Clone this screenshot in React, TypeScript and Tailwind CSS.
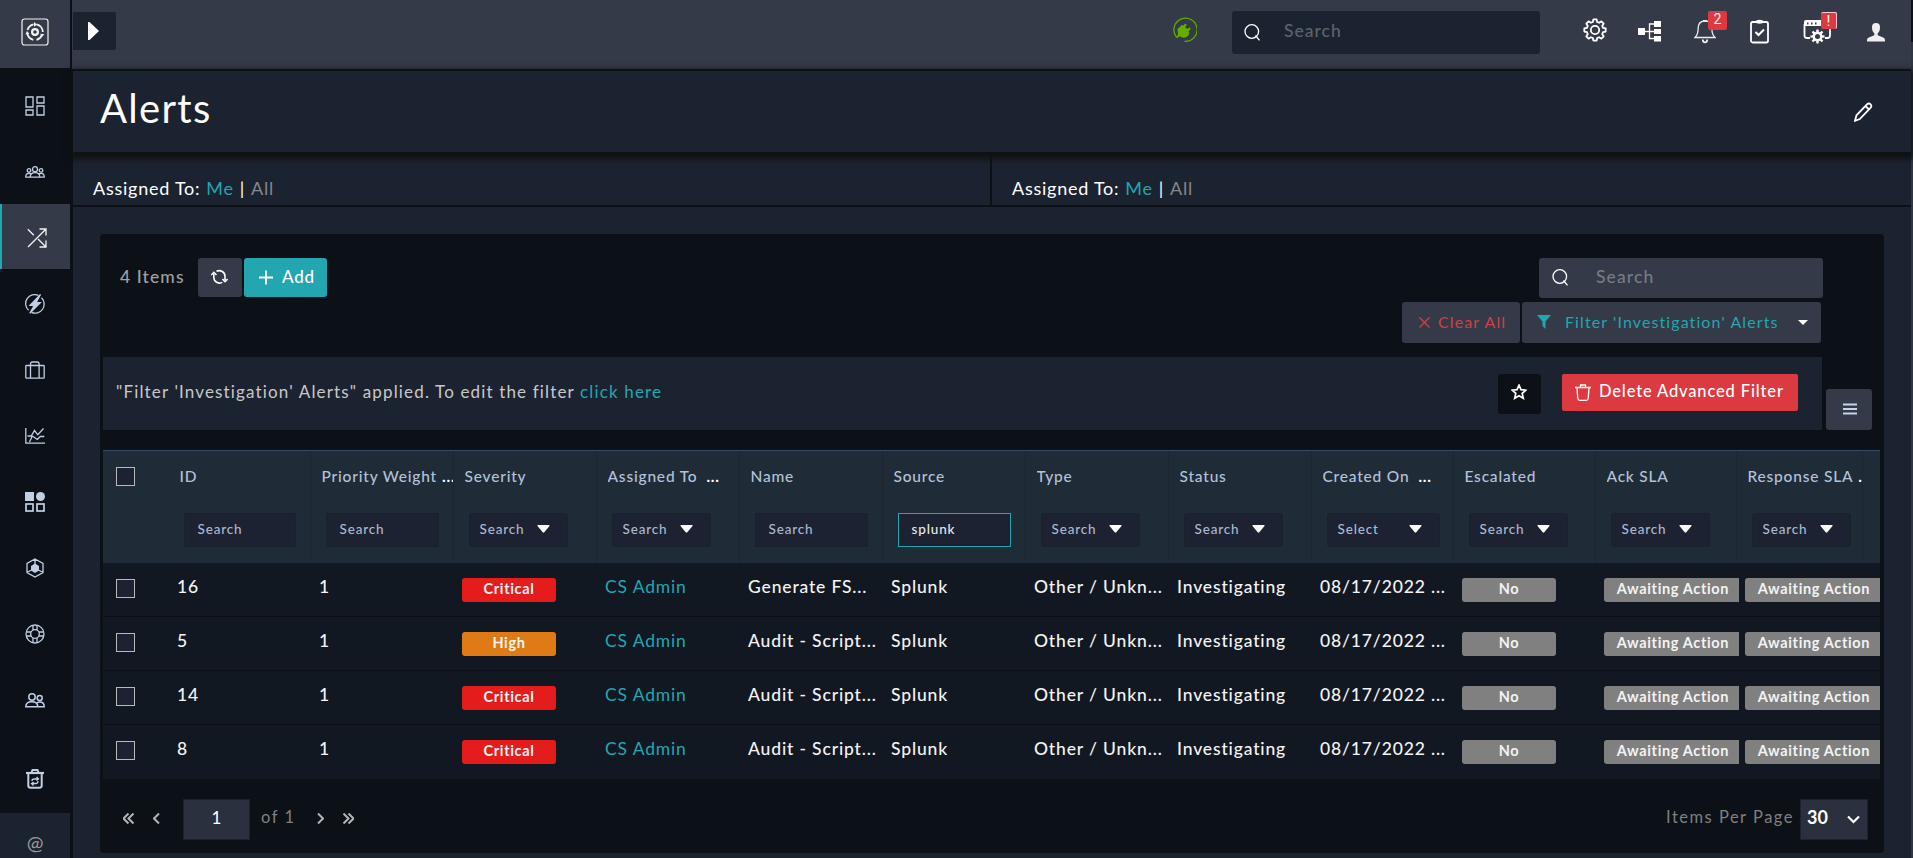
import type { ReactNode } from "react"

type Column = {
  label:     string
  kind:      "input" | "select"
  value?:    string
  hint?:     string
  truncated?: boolean
}

type Alert = {
  id:       number
  severity: "Critical" | "High"
  name:     string
}

const columns: Column[] = [
  { label: "ID", kind: "input" },
  { label: "Priority Weight", kind: "input", truncated: true },
  { label: "Severity", kind: "select" },
  { label: "Assigned To", kind: "select", truncated: true },
  { label: "Name", kind: "input" },
  { label: "Source", kind: "input", value: "splunk" },
  { label: "Type", kind: "select" },
  { label: "Status", kind: "select" },
  { label: "Created On", kind: "select", hint: "Select", truncated: true },
  { label: "Escalated", kind: "select" },
  { label: "Ack SLA", kind: "select" },
  { label: "Response SLA", kind: "select", truncated: true },
]

const alerts: Alert[] = [
  { id: 16, severity: "Critical", name: "Generate FS..." },
  { id: 5, severity: "High", name: "Audit - Script..." },
  { id: 14, severity: "Critical", name: "Audit - Script..." },
  { id: 8, severity: "Critical", name: "Audit - Script..." },
]

const gridCols = "grid grid-cols-[66px_142px_143px_143px_143px_143px_143px_143px_143px_142px_142px_141px_143px]"

function Svg({ w, h, children, className = "" }: { w: number; h: number; children: ReactNode; className?: string }) {
  return (
    <svg
      width={w}
      height={h}
      viewBox={`0 0 ${w} ${h}`}
      fill="none"
      stroke="currentColor"
      strokeWidth="1.3"
      className={`shrink-0 ${className}`}
    >
      {children}
    </svg>
  )
}

/* cog outline with n rounded teeth around (cx, cy) */
function cogPath(cx: number, cy: number, outer: number, inner: number, n: number) {
  const pts: string[] = []
  for (let i = 0; i < n; i++) {
    const a = (i / n) * Math.PI * 2 - Math.PI / 2
    const step = Math.PI / n
    const at = (r: number, t: number) => `${(cx + r * Math.cos(t)).toFixed(2)} ${(cy + r * Math.sin(t)).toFixed(2)}`
    pts.push(at(inner, a - step * 0.68), at(outer, a - step * 0.38), at(outer, a + step * 0.38), at(inner, a + step * 0.68))
  }
  return `M${pts.join("L")}Z`
}

const sideIcons: { name: string; icon: ReactNode; active?: boolean }[] = [
  {
    name: "Dashboard",
    icon: (
      <Svg w={20} h={20}>
        <path d="M1 1h7v10H1zM12 1h7v6h-7zM1 14h7v5H1zM12 10h7v9h-7z" />
      </Svg>
    ),
  },
  {
    name: "Teams",
    icon: (
      <Svg w={20} h={12}>
        <circle cx="10" cy="3.2" r="2.5" />
        <circle cx="4" cy="4.4" r="1.8" />
        <circle cx="16" cy="4.4" r="1.8" />
        <path d="M5.2 11c0-3 1.8-4.4 4.8-4.4s4.8 1.400 4.800 4.400M.7 11c0-2.200.9-3.700 3.300-3.700 1 0 1.700.3 2 .7M19.300 11c0-2.200-.9-3.700-3.300-3.700-1 0-1.700.3-2 .7M.2 11.200h19.600" />
      </Svg>
    ),
  },
  {
    name: "Incident Response",
    active: true,
    icon: (
      <Svg w={20} h={20} className="relative left-px">
        <path d="M.8 1.200l6 6M1 19L19 1M12.500 1H19v6.500M11 11l8 8M12.500 19H19v-6.500" />
      </Svg>
    ),
  },
  {
    name: "Automation",
    icon: (
      <Svg w={20} h={20}>
        <path d="M13.500 1.500A9 9 0 0 0 3.600 16.300M16.500 3.800A9 9 0 0 1 6.500 18.400" />
        <path d="M15.500.5L5 11.300h4.300L4.800 19.200 15.300 8.700H11z" fill="currentColor" />
      </Svg>
    ),
  },
  {
    name: "Resources",
    icon: (
      <Svg w={20} h={18}>
        <rect x=".8" y="4.500" width="18.400" height="12.700" rx=".8" />
        <path d="M5.500 17V3q0-2 2-2h4.600q2 0 2 2v14" />
      </Svg>
    ),
  },
  {
    name: "Reports",
    icon: (
      <Svg w={20} h={16}>
        <path d="M.8 0v15.200H20M2.500 8h3.700l3.300-5.500 3.300 4.300L18.500.5M4.500 14l2.800-6 5 3.500 3-3h4" />
      </Svg>
    ),
  },
  {
    name: "Widgets",
    icon: (
      <Svg w={20} h={20} className="[stroke-width:1.7]">
        <rect x="0" y="0" width="9" height="9" fill="currentColor" stroke="none" />
        <circle cx="15.500" cy="4.500" r="4.500" fill="currentColor" stroke="none" />
        <rect x="1" y="12" width="7" height="7" />
        <rect x="12" y="12" width="7" height="7" />
      </Svg>
    ),
  },
  {
    name: "Connectors",
    icon: (
      <Svg w={20} h={20}>
        <path d="M10 1l8 4.500v9L10 19l-8-4.500v-9z M10 1v6M2 14.500l4.500-2.500M18 14.500L13.500 12" />
        <path d="M10 5.500l4 2.500v4.500L10 15l-4-2.500V8z" fill="currentColor" stroke="none" />
      </Svg>
    ),
  },
  {
    name: "Help",
    icon: (
      <Svg w={20} h={20}>
        <circle cx="10" cy="10" r="9" />
        <circle cx="10" cy="10" r="4.300" />
        <path d="M8 1.500v4.500M12 1.500v4.500M8 14v4.500M12 14v4.500M1.500 8H6M1.500 12H6M14 8h4.500M14 12h4.500" />
      </Svg>
    ),
  },
  {
    name: "Users",
    icon: (
      <Svg w={20} h={15} className="[stroke-width:1.500]">
        <circle cx="7" cy="4" r="3.200" />
        <circle cx="14.700" cy="5" r="2.500" />
        <path d="M.8 13.800c0-3.300 2.400-5 6-5s6 1.700 6 5zM12 9.800c.8-.5 1.600-.7 2.700-.7 2.800 0 4.500 1.600 4.500 4.700h-6" />
      </Svg>
    ),
  },
]

function Sidebar() {
  return (
    <aside className="flex w-[70px] shrink-0 flex-col bg-[#0c1017] text-[#c0cfe4]">
      <div className="flex h-[68px] shrink-0 items-center justify-center bg-[#343a48] pb-[5px] text-[#f2f2f2]">
        <Svg w={28} h={28} className="-ml-px">
          <rect x="1" y="1" width="26" height="26" rx="2.500" strokeWidth="1.200" />
          <circle cx="14" cy="14" r="2.900" strokeWidth="2.200" />
          <path d="M12.500 6.300a8 8 0 0 0-6 5.700M6.300 15.500a8 8 0 0 0 6 6.300M15.500 21.800a8 8 0 0 0 5.600-4.600M21.800 14A8 8 0 0 0 15.500 6.300" strokeWidth="1.800" />
          <path d="M13 4l3 2.400-3 2.300zM4.500 16.500l1.400-3.400 2.500 2.600zM23.500 16.200l-3.600 3.200-.4-3.600z" fill="currentColor" stroke="none" />
        </Svg>
      </div>
      <nav className="flex flex-col pt-[5px]">
        {sideIcons.map(({ name, icon, active }) => (
          <a
            key={name}
            title={name}
            className={`flex items-center justify-center ${
              active ? "-mt-px mb-0.5 h-[65px] border-l-2 border-[#22a6b0] bg-[#343a48] pt-[3px] text-[#f4f4f4]" : "h-[66px]"
            }`}
          >
            {icon}
          </a>
        ))}
      </nav>
      <div className="flex h-[80px] items-center justify-center pt-[12px]">
        <Svg w={18} h={20} className="[stroke-width:2]">
          <path d="M0 4h18" strokeWidth="2.200" />
          <path d="M5.500 3.500L6.500 1h5l1 2.500" />
          <path d="M2.300 4v12.500q0 2.300 2.300 2.300h8.800q2.300 0 2.300-2.300V4" />
          <path d="M12 10H8q-2 0-2 2M12 12q0 2.500-2 2.500H6M10.500 8l2 2-2 1.500M7.500 16.500l-2-2 2-1.500" strokeWidth="1.300" />
        </Svg>
      </div>
      <div className="flex grow items-center justify-center bg-[#1c2330] pt-[13px] text-[20px] text-[#9a9a9a]">@</div>
    </aside>
  )
}

function SearchIcon() {
  return (
    <Svg w={17} h={17} className="text-white">
      <circle cx="7.800" cy="7.500" r="6.800" />
      <path d="M11.500 11.500l4 4.800" />
    </Svg>
  )
}

function Badge({ children, className }: { children: ReactNode; className: string }) {
  return (
    <span className={`absolute flex items-center justify-center rounded-[2px] bg-[#dc3a40] font-[Roboto,sans-serif] text-[#f6f6f6] ${className}`}>
      {children}
    </span>
  )
}

function TopBar() {
  return (
    <header className="flex h-[69px] shrink-0 items-start bg-[#343a48] pl-px text-white">
      <button className="mt-3 flex h-[38px] w-[43px] items-center rounded-r-[2px] bg-[#1c2330] pb-px pl-[15px]">
        <svg width="11" height="18" viewBox="0 0 11 18" fill="currentColor"><path d="M0 0h1.500L11 9l-9.500 9H0z" /></svg>
      </button>
      <div className="grow" />
      <Svg w={25} h={26} className="mt-[17px] text-[#63ae00]">
        <path d="M5.500 20.800L4.300 19.800A11.600 11.600 0 1 1 12.500 24.300" strokeWidth="1.200" />
        <path d="M5.500 12l4-3.800q1-.6 1.500.5l2.300-1.900q1.500-.1 1.200 1.400l-1.300 1.800 2 2 2-1.400q1.600 0 1.300 1.600l-2 2.300.8 1.200-.3 1.800c-1 2-3 3.200-5.200 3.200-1.700 0-3-.5-3.800-1.400L5 20.800l-.5-1 1.500-2z" fill="currentColor" stroke="none" />
      </Svg>
      <div className="mt-[11px] ml-[35px] flex h-[43px] w-[308px] items-center gap-[23px] rounded-[3px] bg-[#1c2330] pb-px pl-3">
        <SearchIcon />
        <span className="pb-px text-[17.500px] font-medium tracking-[1px] text-[#5c636d]">Search</span>
      </div>
      <div className="mt-[19px] ml-[43px] flex h-6 items-start">
        <Svg w={24} h={24} className="-mt-px [stroke-width:1.800]">
          <path d={cogPath(12, 12, 10.800, 8.300, 8)} strokeLinejoin="round" />
          <circle cx="12" cy="12" r="4.200" />
        </Svg>
        <Svg w={24} h={24} className="ml-[31px]">
          <path d="M0 9h7v7H0zM16 2h7v6h-7zM16 10h7v5h-7zM16 17h7v5.500h-7z" fill="currentColor" stroke="none" />
          <path d="M7 12.500h9M16 5h-4.500v14.500H16" />
        </Svg>
        <div className="relative ml-8">
          <Svg w={22} h={25} className="text-[#eee]">
            <path d="M1 18.500c3.500-3 3-6.500 3.200-10C4.500 4 7.500 2 11 2s6.500 2 6.800 6.500c.2 3.500-.3 7 3.200 10z" />
            <path d="M8.800 20.500c0 3.800 4.400 3.800 4.400 0M9 1.800h4" strokeWidth="1.800" />
          </Svg>
          <Badge className="-top-2 left-[14px] h-[19px] w-[19px] pb-0.5 text-[14px]">2</Badge>
        </div>
        <Svg w={19} h={25} className="ml-[34px] [stroke-width:1.800]">
          <rect x="1" y="3" width="17" height="20.500" rx="1.800" />
          <path d="M5 3q1-2.200 4.500-2.200T14 3q-1 1.800-4.500 1.800T5 3z" fill="currentColor" stroke="none" />
          <path d="M5.500 13l3 3 5.500-5.500" strokeWidth="2" />
        </Svg>
        <div className="relative ml-[34px]">
          <Svg w={29} h={25} className="[stroke-width:1.800]">
            <path d="M1 3q0-2 2-2h23q1.500 0 1.500 2v4H1z" fill="currentColor" stroke="none" />
            <path d="M4 4.500h1.500M8 4.500h1.500M12 4.500h1.500" stroke="#343a48" />
            <path d="M1.500 5v11.500q0 2.500 2.500 2.500h3M22 19h2.500q2.500 0 2.500-2.500V6" />
            <path d={cogPath(14.500, 17.500, 7.200, 5, 8)} fill="currentColor" stroke="none" />
            <circle cx="14.500" cy="17.500" r="2.500" fill="#343a48" stroke="none" />
          </Svg>
          <Badge className="-top-[7px] left-[18px] h-[17px] w-4 border-t border-r border-[#f3c6d8] text-[15px]">!</Badge>
        </div>
        <svg width="18" height="19" viewBox="0 0 18 19" fill="#efefef" className="mt-[4px] ml-[35px] shrink-0">
          <path d="M9 0c3 0 4.200 2 4 4.800-.1 2.400-.8 4.200-2.300 5.400v2l5.500 2.300c1.300.6 1.800 1.500 1.800 3v1H0v-1c0-1.500.5-2.400 1.800-3l5.500-2.300v-2C5.800 9 5.100 7.200 5 4.800 4.800 2 6 0 9 0z" />
        </svg>
      </div>
      <div className="w-[26px] shrink-0" />
    </header>
  )
}

function AssignedTo({ className = "" }: { className?: string }) {
  return (
    <div className={`flex items-start gap-[6px] pt-6 text-[18px] leading-6 tracking-[0.75px] text-white ${className}`}>
      <span>Assigned To:</span>
      <a className="text-[#22a6b0]">Me</a>
      <span>|</span>
      <a className="text-[#84878d]">All</a>
    </div>
  )
}

function Checkbox() {
  return <span className="ml-[13px] block h-[19px] w-[19px] border border-[#b9b9b9] bg-[#1c2231]" />
}

function Toolbar() {
  return (
    <div className="flex h-[123px] items-start pt-6 pr-[61px] pl-5 text-[17px]">
      <span className="w-[78px] text-[17.500px] leading-[37px] font-medium tracking-[1.100px] text-[#a0a0a0]">4 Items</span>
      <button className="flex h-[39px] w-[44px] items-center justify-center rounded-[3px] bg-[#343a48] pr-0.5 pb-px text-white">
        <Svg w={17} h={16} className="[stroke-width:1.600]">
          <path d="M2.800 4.500v4a5.800 5.800 0 0 0 8.500 4.900M14 11.300V7.500A5.800 5.800 0 0 0 5.500 2.300" />
          <path d="M.3 6l2.500-2.700L5.500 6M11.400 10l2.600 2.700 2.600-2.700" />
        </Svg>
      </button>
      <button className="ml-0.5 flex h-[39px] w-[83px] items-center gap-[9px] rounded-[3px] bg-[#22a6b0] pb-[2px] pl-[15px] font-medium tracking-[0.8px] text-white">
        <Svg w={14} h={16}><path d="M7 1.500v14M0 8.500h14" strokeWidth="1.800" /></Svg>
        Add
      </button>
      <div className="ml-auto flex flex-col items-end gap-1 tracking-[1.100px]">
        <div className="flex h-10 w-[284px] items-center gap-[27px] rounded-[3px] bg-[#343a48] pb-0.5 pl-[13px] text-[17.500px] font-medium text-[#767b85]">
          <SearchIcon />
          Search
        </div>
        <div className="mr-0.5 flex gap-0.5 text-[16px]">
          <button className="flex h-[41px] w-[118px] items-center gap-2 rounded-[3px] bg-[#343a48] pb-0.5 pl-[17px] whitespace-nowrap text-[#d23f45]">
            <Svg w={11} h={11} className="mt-0.5"><path d="M.5.5l10 10M10.500.5l-10 10" /></Svg>
            Clear All
          </button>
          <button className="flex h-[41px] w-[299px] items-center rounded-[3px] bg-[#343a48] pb-0.5 pl-[15px] whitespace-nowrap text-[#22a6b0]">
            <svg width="14" height="14" viewBox="0 0 14 14" fill="currentColor" className="mt-px"><path d="M0 0h14L8.500 6.500V14L5.500 11V6.500z" /></svg>
            <span className="ml-[14px]">Filter 'Investigation' Alerts</span>
            <svg width="10" height="5" viewBox="0 0 10 5" fill="#fff" className="mt-0.5 mr-[13px] ml-auto"><path d="M0 0h10L5 5z" /></svg>
          </button>
        </div>
      </div>
    </div>
  )
}

function FilterBar() {
  return (
    <div className="flex h-[73px] items-start pl-[3px] text-[16px] tracking-[1px]">
      <div className="flex h-full w-[1719px] items-start bg-[#1c2330] pl-[13px]">
        <p className="text-[17px] leading-[69px] tracking-[1.150px] text-[#c8c8c8]">
          "Filter 'Investigation' Alerts" applied. To edit the filter <a className="text-[#22a6b0]">click here</a>
        </p>
        <button className="mt-[17px] ml-auto flex h-10 w-[43px] items-center justify-center rounded-[3px] bg-[#0c1017] pr-px pb-[5px] text-white">
          <Svg w={16} h={16}>
            <path d="M8 1.200l2 4.500 4.900.5-3.700 3.200 1.100 4.900L8 11.800l-4.300 2.500 1.100-4.900L1.100 6.200 6 5.700z" strokeWidth="1.700" />
          </Svg>
        </button>
        <button className="mt-[17px] mr-6 ml-[21px] flex h-[37px] w-[236px] items-center gap-2 rounded-[2px] bg-[#dc3a40] pb-[3px] pl-[13px] text-[16.500px] font-medium tracking-[0.850px] whitespace-nowrap text-white">
          <Svg w={16} h={17} className="mt-0.5">
            <path d="M0 3.500h16M5.500 3V1h5v2M2 4l.8 10.500q.2 1.800 2 1.800h6.400q1.800 0 2-1.800L14 4" />
          </Svg>
          Delete Advanced Filter
        </button>
      </div>
      <button className="mt-8 ml-1 flex h-[41px] w-[46px] items-center justify-center rounded-[3px] bg-[#343a48] pb-[2px] pl-px text-[#c6d3ea]">
        <Svg w={14} h={12}><path d="M0 1.500h14M0 6h14M0 10.500h14" strokeWidth="2" /></Svg>
      </button>
    </div>
  )
}

function HeaderCell({ column, last }: { column: Column; last: boolean }) {
  const isSelect = column.kind === "select"
  const width = column.label === "ID" ? "w-[112px]" : isSelect && !column.hint ? "w-[99px]" : "w-[113px]"

  return (
    <div className={`h-full overflow-hidden border-r border-[#1c2631] pl-[10.500px] ${last ? "w-[126px]" : ""}`}>
      <div className="flex h-[51px] items-center gap-[7px] overflow-hidden text-[15.500px] font-medium tracking-[0.8px] whitespace-nowrap text-[#b3c2da]">
        {column.label}
        {column.truncated && <b className={column.label.length < 12 ? "ml-0.5 text-white" : "-ml-0.5 text-white"}>...</b>}
      </div>
      <div
        className={`mt-[11px] flex h-[34px] items-center border pb-px text-[13.500px] font-medium tracking-[0.850px] ${width} ${
          column.value ? "border-[#22a6b0] text-[#e8e8e8]" : "border-[#19212b] text-[#aab9d0]"
        } ${isSelect ? "ml-1 rounded-[3px] pl-[10px]" : "ml-1 pl-[13px]"} bg-[#1c2231]`}
      >
        {column.value ?? column.hint ?? "Search"}
        {isSelect && (
          <svg width="13" height="8" viewBox="0 0 13 8" fill="#fff" className="mr-[17px] mb-0.5 ml-auto">
            <path d="M1 0h11q1 0 .5 1L7.300 7.300q-.8.800-1.600 0L.5 1Q0 0 1 0z" />
          </svg>
        )}
      </div>
    </div>
  )
}

function Pill({ children, className }: { children: ReactNode; className: string }) {
  return (
    <span className={`mt-px flex h-6 items-center justify-center rounded-[3px] pb-[3px] text-[14.500px] font-bold tracking-[0.650px] whitespace-nowrap text-[#f3f3f3] ${className}`}>
      {children}
    </span>
  )
}

function AlertTable() {
  return (
    <div className="mt-5 ml-[3px] w-[1777px] overflow-hidden">
      <div className={`${gridCols} h-[113px] border-t border-[#3a4a66] bg-[#202b38]`}>
        <div className="pt-4"><Checkbox /></div>
        {columns.map((column, i) => (
          <HeaderCell key={column.label} column={column} last={i === columns.length - 1} />
        ))}
      </div>
      {alerts.map((alert) => (
        <div
          key={alert.id}
          className={`${gridCols} h-[54px] items-center border-b border-[#0c1016] bg-[#121821] text-[17.500px] font-medium tracking-[0.850px] whitespace-nowrap text-[#f4f4f4] *:pl-2 *:first:pl-0 last:border-[#121821]`}
        >
          <div className="pb-0.5"><Checkbox /></div>
          <div className="pb-1">{alert.id}</div>
          <div className="pb-1">1</div>
          <div>
            <Pill className={alert.severity === "High" ? "w-[94px] bg-[#de7b14]" : "w-[94px] bg-[#e51c1c]"}>{alert.severity}</Pill>
          </div>
          <div className="pb-1 font-normal text-[#22a6b0]">CS Admin</div>
          <div className="pb-1">{alert.name}</div>
          <div className="pb-1">Splunk</div>
          <div className="pb-1">Other / Unkn...</div>
          <div className="pb-1">Investigating</div>
          <div className="pb-1">08/17/2022 ...</div>
          <div><Pill className="w-[94px] bg-[#808080]">No</Pill></div>
          <div><Pill className="w-[135px] rounded-r-none bg-[#808080] pl-[3px]">Awaiting Action</Pill></div>
          <div><Pill className="w-[135px] rounded-r-none bg-[#808080] pl-[3px]">Awaiting Action</Pill></div>
        </div>
      ))}
    </div>
  )
}

function Pagination() {
  return (
    <div className="mt-5 flex h-[41px] items-center pr-4 pl-[23px] text-[16.500px] text-[#b5b5b5]">
      <Svg w={11} h={11} className="mb-0.5 [stroke-width:2]"><path d="M5.500.5l-5 5 5 5M10.500.5l-5 5 5 5" /></Svg>
      <Svg w={7} h={11} className="mb-0.5 ml-[19px] [stroke-width:2]"><path d="M6 .5l-5 5 5 5" /></Svg>
      <span className="ml-[23px] flex h-[41px] w-[67px] items-center justify-center border border-[#1b222c] bg-[#2a303d] pb-1 text-[17px] text-white">1</span>
      <span className="ml-[11px] w-[56px] pb-[5px] tracking-[1.500px] text-[#808080]">of 1</span>
      <Svg w={7} h={11} className="mb-0.5 [stroke-width:2]"><path d="M1 .5l5 5-5 5" /></Svg>
      <Svg w={11} h={11} className="mb-0.5 ml-[19px] [stroke-width:2]"><path d="M.5.5l5 5-5 5M5.500.5l5 5-5 5" /></Svg>
      <span className="ml-auto pb-1 tracking-[1.500px] text-[#808080]">Items Per Page</span>
      <span className="ml-[6px] flex h-[41px] w-[68px] items-center border border-[#1b222c] bg-[#2a303d] pb-1 pl-[6px] text-[18px] font-bold text-white">
        30
        <Svg w={13} h={9} className="mt-1 mr-[7px] ml-auto"><path d="M1 1.500l5.500 5.500L12 1.500" strokeWidth="2.200" /></Svg>
      </span>
    </div>
  )
}

export default function App() {
  return (
    <div className="flex h-[858px] w-[1913px] overflow-hidden bg-[#0c1017] font-[Lato,sans-serif]">
      <Sidebar />
      <div className="ml-0.5 flex w-[1839px] shrink-0 flex-col">
        <TopBar />
        <div className="ml-px flex grow flex-col bg-[#1c2330]">
          <div className="z-10 flex h-[83px] shrink-0 items-center justify-between border-t-2 border-[#0c1017] bg-[#1c2330] pr-[38px] pl-[27px] text-white shadow-[0_4px_6px_3px_#0f1212]">
            <h1 className="pb-[7px] text-[40px] tracking-[1.300px]">Alerts</h1>
            <Svg w={19} h={20} className="[stroke-width:1.800]">
              <path d="M1 18.800l1.500-5.500L13.200 2.200q1.500-1.500 3.200 0t.3 3.500L5.800 17zM11.500 4l3.500 3.500" />
            </Svg>
          </div>
          <div className="flex h-[55px] shrink-0 border-b-2 border-[#0c1017]">
            <AssignedTo className="w-[919px] border-r-2 border-[#0c1017] pl-5" />
            <AssignedTo className="pl-5" />
          </div>
          <section className="mt-[27px] ml-[27px] h-[619px] w-[1784px] rounded-[4px] bg-[#0c1017]">
            <Toolbar />
            <FilterBar />
            <AlertTable />
            <Pagination />
          </section>
        </div>
      </div>
      <div className="mt-[42px] grow bg-[#2f3644]" />
    </div>
  )
}
